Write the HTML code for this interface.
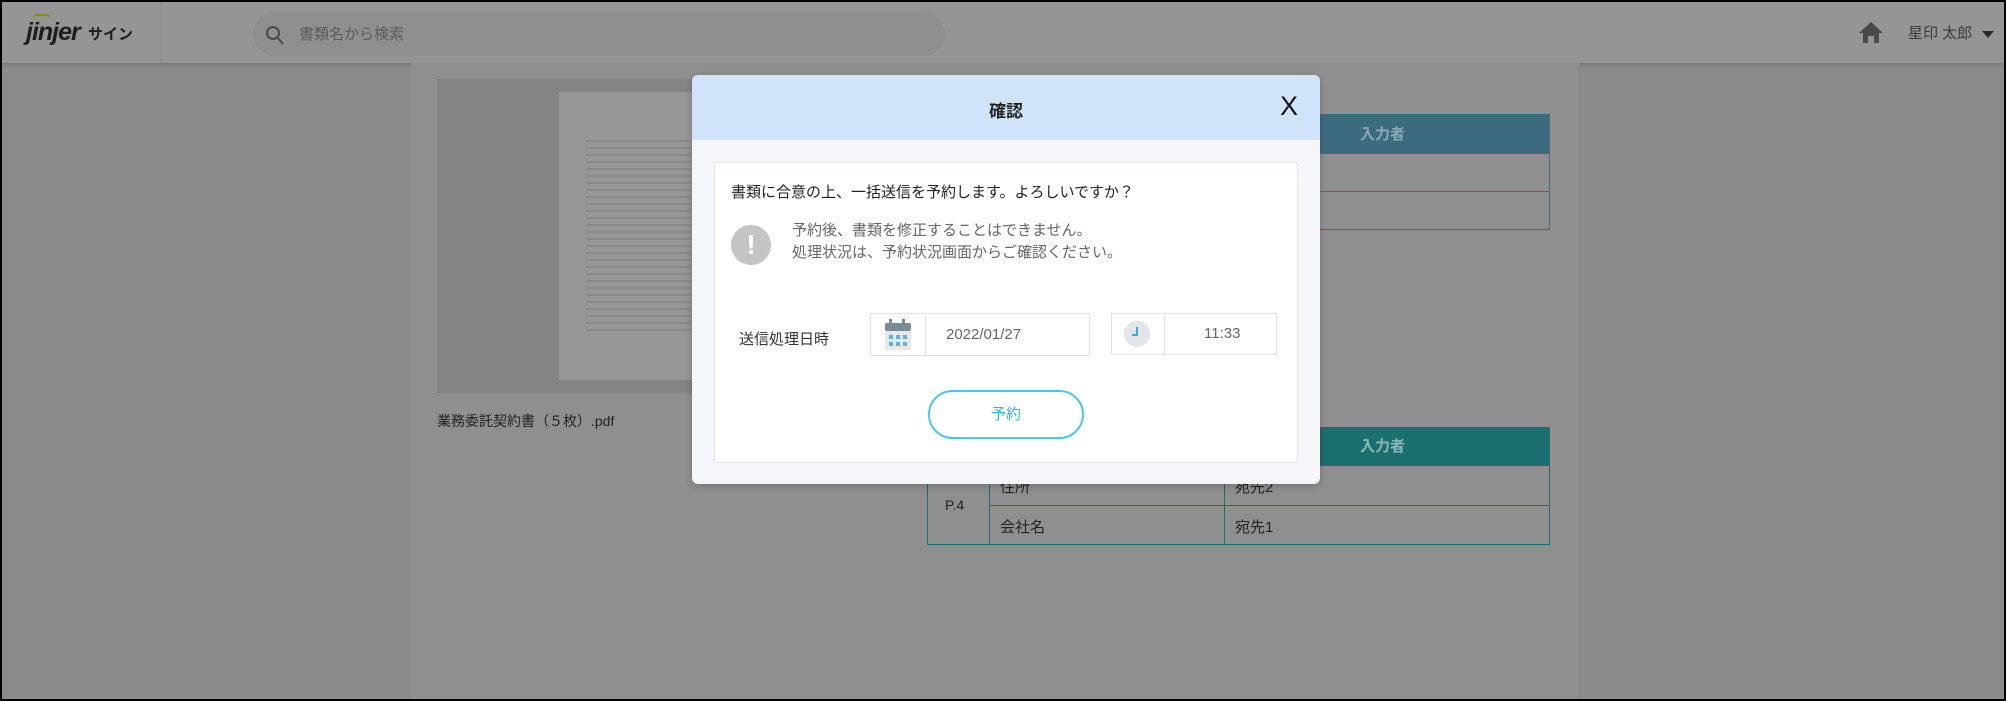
<!DOCTYPE html>
<html><head><meta charset="utf-8"><style>
*{margin:0;padding:0;box-sizing:border-box}
body{width:2006px;height:701px;overflow:hidden;background:#8b8b8b;font-family:"Liberation Sans","Noto Sans CJK JP",sans-serif;position:relative}
.a{position:absolute}
</style></head><body>
<div class="a" style="left:0;top:0;width:2006px;height:701px;border:2px solid #000;z-index:50;pointer-events:none"></div>
<!-- header -->
<div class="a" style="left:0;top:0;width:2006px;height:63px;background:#959595;box-shadow:0 2px 3px rgba(0,0,0,.15)"></div>
<div class="a" style="left:160px;top:0;width:1px;height:63px;background:#8d8d8d"></div>
<div class="a" style="left:26px;top:18px;font:italic bold 25px 'Liberation Sans',sans-serif;color:#1e1e1e;letter-spacing:-1px">jinjer</div>
<div class="a" style="left:32px;top:14px;width:20px;height:6px;border-top:2px solid #8a8a1a;border-radius:10px 10px 0 0"></div>
<div class="a" style="left:88px;top:23px;font-size:15px;font-weight:bold;color:#1e1e1e">サイン</div>
<div class="a" style="left:253px;top:12px;width:692px;height:44px;border-radius:22px;background:#8f8f8f"></div>
<svg class="a" style="left:265px;top:25px" width="20" height="22" viewBox="0 0 20 22"><circle cx="8" cy="8" r="6" fill="none" stroke="#4a4a4a" stroke-width="2"/><line x1="12.5" y1="12.5" x2="18" y2="19" stroke="#4a4a4a" stroke-width="2"/></svg>
<div class="a" style="left:299px;top:23px;font-size:15px;color:#5a5a5a">書類名から検索</div>
<svg class="a" style="left:1858px;top:20px" width="26" height="24" viewBox="0 0 26 24"><path d="M13 2 L1 13 L5 13 L5 23 L10 23 L10 16 L16 16 L16 23 L21 23 L21 13 L25 13 Z" fill="#4a4a4a"/></svg>
<div class="a" style="left:1908px;top:22px;font-size:15px;color:#3a3a3a">星印 太郎</div>
<div class="a" style="left:1982px;top:31px;border-left:6px solid transparent;border-right:6px solid transparent;border-top:7px solid #2a2a2a"></div>
<!-- content panel -->
<div class="a" style="left:410px;top:63px;width:1170px;height:638px;background:#8f8f8f;border-left:1px solid #868686;border-right:1px solid #868686"></div>
<div class="a" style="left:437px;top:79px;width:433px;height:314px;background:#848484"></div>
<div class="a" style="left:559px;top:92px;width:311px;height:288px;background:#979797"></div>
<div class="a" style="left:586px;top:135px;width:284px;height:200px;background:repeating-linear-gradient(#979797 0,#979797 5px,#8a8a8a 5px,#8a8a8a 7px)"></div>
<div class="a" style="left:437px;top:411px;font-size:14px;color:#222">業務委託契約書（５枚）.pdf</div>
<!-- upper table -->
<div class="a" style="left:927px;top:114px;width:623px;height:116px;border:1px solid #3e6e80"></div>
<div class="a" style="left:927px;top:114px;width:623px;height:40px;background:#3c6b80"></div>
<div class="a" style="left:1360px;top:123px;font-size:15px;font-weight:bold;color:#8aa8b8">入力者</div>
<div class="a" style="left:927px;top:191px;width:623px;height:1px;background:#3e6e80"></div>
<!-- lower table -->
<div class="a" style="left:927px;top:427px;width:623px;height:118px;border:1px solid #1a6e6e"></div>
<div class="a" style="left:927px;top:427px;width:623px;height:39px;background:#1b6f6e"></div>
<div class="a" style="left:1360px;top:435px;font-size:15px;font-weight:bold;color:#8ab8b8">入力者</div>
<div class="a" style="left:989px;top:505px;width:561px;height:1px;background:#1a6e6e"></div>
<div class="a" style="left:989px;top:466px;width:1px;height:79px;background:#1a6e6e"></div>
<div class="a" style="left:1224px;top:466px;width:1px;height:79px;background:#1a6e6e"></div>
<div class="a" style="left:945px;top:497px;font-size:14px;color:#222">P.4</div>
<div class="a" style="left:1000px;top:476px;font-size:15px;color:#222">住所</div>
<div class="a" style="left:1235px;top:476px;font-size:15px;color:#222">宛先2</div>
<div class="a" style="left:1000px;top:516px;font-size:15px;color:#222">会社名</div>
<div class="a" style="left:1235px;top:516px;font-size:15px;color:#222">宛先1</div>
<!-- modal -->
<div class="a" style="left:692px;top:75px;width:628px;height:409px;background:#f5f6fa;border-radius:6px;overflow:hidden;box-shadow:0 2px 8px rgba(0,0,0,.2)">
  <div style="height:65px;background:#cfe4fa;position:relative">
    <div class="a" style="left:0;width:628px;top:22px;text-align:center;font-size:17px;font-weight:bold;color:#222">確認</div>
    <div class="a" style="left:588px;top:16px;font-size:27px;color:#111">X</div>
  </div>
  <div class="a" style="left:22px;top:87px;width:584px;height:301px;background:#fff;border:1px solid #e4e7ec">
    <div class="a" style="left:16px;top:18px;font-size:15px;color:#222">書類に合意の上、一括送信を予約します。よろしいですか？</div>
    <div class="a" style="left:16px;top:62px;width:40px;height:40px;border-radius:50%;background:#c4c4c4;color:#fff;font-size:28px;font-weight:bold;text-align:center;line-height:40px">!</div>
    <div class="a" style="left:77px;top:57px;font-size:15px;line-height:22px;color:#666">予約後、書類を修正することはできません。<br>処理状況は、予約状況画面からご確認ください。</div>
    <div class="a" style="left:24px;top:165px;font-size:15px;color:#333">送信処理日時</div>
    <div class="a" style="left:155px;top:150px;width:220px;height:43px;border:1px solid #e2e2e2">
      <div class="a" style="left:54px;top:0;width:1px;height:41px;background:#e2e2e2"></div>
      <svg class="a" style="left:12px;top:4px" width="30" height="34" viewBox="0 0 30 34"><rect x="6" y="1" width="3" height="6" fill="#7c8a96"/><rect x="19" y="1" width="3" height="6" fill="#7c8a96"/><rect x="2" y="5" width="26" height="8" rx="2" fill="#7c8a96"/><rect x="2" y="13" width="26" height="19" fill="#e6e8ea"/><g fill="#5cb0ec"><rect x="6" y="17" width="4" height="4"/><rect x="13" y="17" width="4" height="4"/><rect x="20" y="17" width="4" height="4"/><rect x="6" y="24" width="4" height="4"/><rect x="13" y="24" width="4" height="4"/><rect x="20" y="24" width="4" height="4"/></g></svg>
      <div class="a" style="left:75px;top:12px;font-size:15px;color:#666">2022/01/27</div>
    </div>
    <div class="a" style="left:396px;top:150px;width:166px;height:42px;border:1px solid #e2e2e2">
      <div class="a" style="left:52px;top:0;width:1px;height:40px;background:#e2e2e2"></div>
      <svg class="a" style="left:11px;top:6px" width="28" height="28" viewBox="0 0 28 28"><circle cx="14" cy="14" r="13" fill="#e3e5e8"/><path d="M14 7 V15 H9" fill="none" stroke="#3ea6ef" stroke-width="2"/></svg>
      <div class="a" style="left:92px;top:11px;font-size:15px;color:#666">11:33</div>
    </div>
    <div class="a" style="left:213px;top:227px;width:156px;height:49px;border:2px solid #44c8f0;border-radius:25px;text-align:center;line-height:45px;font-size:15px;color:#2ab7ee">予約</div>
  </div>
</div>
</body></html>
